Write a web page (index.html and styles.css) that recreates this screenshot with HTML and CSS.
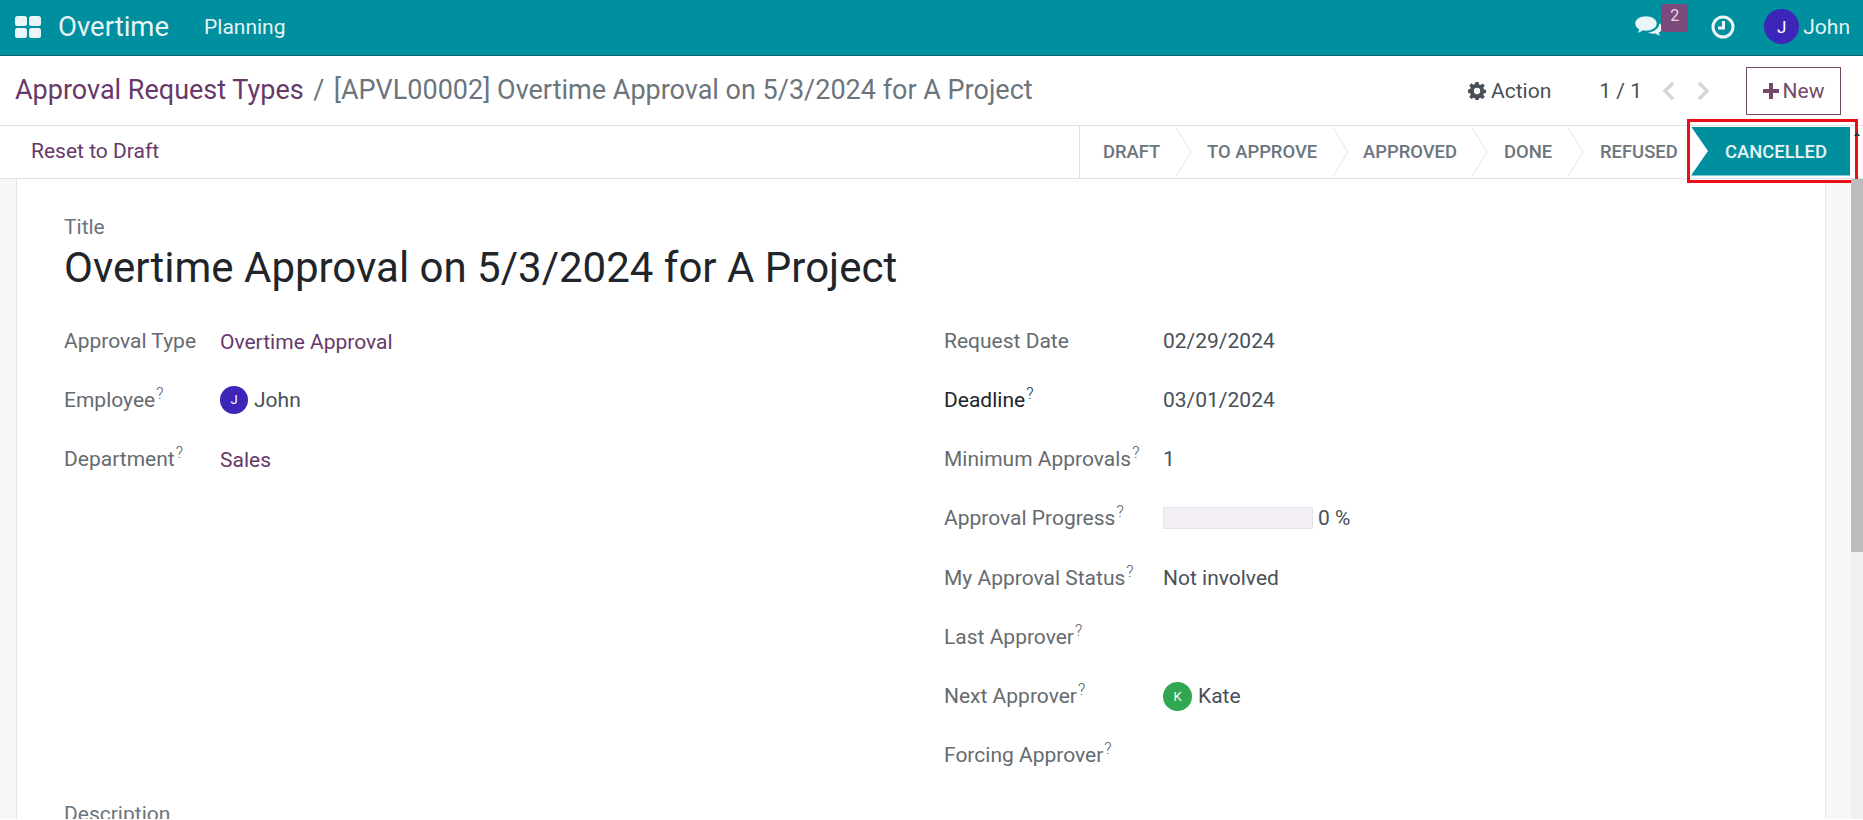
FILE: index.html
```html
<!DOCTYPE html>
<html lang="en">
<head>
<meta charset="utf-8">
<title>Overtime Approval</title>
<link rel="stylesheet" href="styles.css">
</head>
<body>
<header class="navbar">
  <svg class="apps" viewBox="0 0 26 22" width="26" height="22"><rect x="0" y="0" width="12" height="10" rx="2.5"/><rect x="14" y="0" width="12" height="10" rx="2.5"/><rect x="0" y="12" width="12" height="10" rx="2.5"/><rect x="14" y="12" width="12" height="10" rx="2.5"/></svg>
  <span class="brand">Overtime</span>
  <span class="menu">Planning</span>
  <div class="systray">
    <span class="chat">
      <svg viewBox="0 0 28 21" width="28" height="21"><path class="fill" d="M11 0C5 0 0 3 0 7.5c0 2.600 1.600 4.700 4 6-.3 1.200-1 2.300-2 3.300 2 0 4-.8 5.500-2.100 1.100.2 2.300.3 3.500.3 6 0 11-3.200 11-7.500S17 0 11 0z"/><path class="fill" d="M24 7.500c0 5-5.500 8.400-11.500 8.700 1.600 1.200 3.700 1.800 6 1.800.8 0 1.500-.1 2.200-.2 1.300 1.200 3 1.900 5 2-.8-.9-1.500-2-1.700-3 2.400-1.200 4-3.200 4-5.300 0-1.800-1.500-3.500-4-4.500z"/></svg>
      <span class="badge">2</span>
    </span>
    <svg class="clock" viewBox="0 0 24 24" width="24" height="24"><circle cx="12" cy="12" r="10" /><path d="M12.500 6v7H7"/></svg>
    <span class="user"><span class="avatar avatar-nav">J</span><span>John</span></span>
  </div>
</header>

<div class="control">
  <div class="breadcrumb"><a class="crumb-link">Approval Request Types</a><span class="crumb-sep">/</span><span class="crumb-cur">[APVL00002] Overtime Approval on 5/3/2024 for A Project</span></div>
  <div class="actions">
    <span class="action">
      <svg viewBox="0 0 20 20" width="18" height="18"><path d="M8.300 0h3.400l.5 2.700 1.700.7 2.300-1.600 2.400 2.400-1.600 2.300.7 1.700 2.700.5v3.400l-2.700.5-.7 1.700 1.600 2.300-2.400 2.400-2.300-1.600-1.700.7-.5 2.700H8.300l-.5-2.700-1.700-.7-2.300 1.600-2.400-2.400 1.600-2.300-.7-1.700L-.4 11.700V8.300l2.700-.5.7-1.700L1.400 3.800l2.400-2.400 2.300 1.600 1.700-.7zM10 6.500a3.500 3.500 0 100 7 3.500 3.500 0 000-7z" fill-rule="evenodd"/></svg>
      <span>Action</span>
    </span>
    <span class="pager">1 / 1</span>
    <span class="pager-nav">
      <svg viewBox="0 0 14 20" width="14" height="20"><path d="M11 2 3 10l8 8"/></svg>
      <svg viewBox="0 0 14 20" width="14" height="20"><path d="M3 2l8 8-8 8"/></svg>
    </span>
    <button class="new"><svg viewBox="0 0 16 16" width="16" height="16"><path d="M6 0h4v6h6v4h-6v6H6v-6H0V6h6z"/></svg><span>New</span></button>
  </div>
</div>

<div class="statusbar">
  <a class="reset">Reset to Draft</a>
  <div class="steps">
    <span class="step step-draft">DRAFT<svg class="chev" viewBox="0 0 16 48" width="16" height="48"><path d="M0 0l15 24L0 48"/></svg></span>
    <span class="step step-toapprove">TO APPROVE<svg class="chev" viewBox="0 0 16 48" width="16" height="48"><path d="M0 0l15 24L0 48"/></svg></span>
    <span class="step step-approved">APPROVED<svg class="chev" viewBox="0 0 16 48" width="16" height="48"><path d="M0 0l15 24L0 48"/></svg></span>
    <span class="step step-done">DONE<svg class="chev" viewBox="0 0 16 48" width="16" height="48"><path d="M0 0l15 24L0 48"/></svg></span>
    <span class="step step-refused">REFUSED</span>
    <span class="step step-active">CANCELLED</span>
  </div>
  <span class="highlight"></span>
  <span class="scroll-arrow"></span>
</div>

<div class="content">
  <main class="sheet">
    <div class="title-label">Title</div>
    <h1 class="title">Overtime Approval on 5/3/2024 for A Project</h1>
    <div class="columns">
      <div class="col col-left">
        <div class="row"><label class="lbl">Approval Type</label><a class="val link">Overtime Approval</a></div>
        <div class="row"><label class="lbl">Employee<sup>?</sup></label><span class="val person"><span class="avatar avatar-j">J</span>John</span></div>
        <div class="row"><label class="lbl">Department<sup>?</sup></label><a class="val link">Sales</a></div>
      </div>
      <div class="col col-right">
        <div class="row"><label class="lbl">Request Date</label><span class="val">02/29/2024</span></div>
        <div class="row"><label class="lbl strong">Deadline<sup>?</sup></label><span class="val">03/01/2024</span></div>
        <div class="row"><label class="lbl">Minimum Approvals<sup>?</sup></label><span class="val">1</span></div>
        <div class="row"><label class="lbl">Approval Progress<sup>?</sup></label><span class="val progress"><span class="bar"></span>0 %</span></div>
        <div class="row"><label class="lbl">My Approval Status<sup>?</sup></label><span class="val">Not involved</span></div>
        <div class="row"><label class="lbl">Last Approver<sup>?</sup></label></div>
        <div class="row"><label class="lbl">Next Approver<sup>?</sup></label><span class="val person"><span class="avatar avatar-k">K</span>Kate</span></div>
        <div class="row"><label class="lbl">Forcing Approver<sup>?</sup></label></div>
      </div>
    </div>
    <div class="desc">Description</div>
  </main>
  <div class="scrollbar"><span class="thumb"></span></div>
</div>
</body>
</html>
```
FILE: styles.css
```css
* { box-sizing: border-box; }
html, body { margin: 0; height: 820px; overflow: hidden; }
body { font-family: Roboto, "Liberation Sans", sans-serif; font-size: 21px; color: #495057; background: #fff; }

.navbar { height: 56px; background: #008f9e; border-bottom: 1px solid #00646f; display: flex; align-items: center; padding: 0 13px 2px 15px; color: #e6f4f5; }
.apps { fill: #e9f5f6; flex: none; }
.brand { font-size: 27.500px; margin-left: 17px; }
.menu { font-size: 21px; margin-left: 35px; }
.systray { margin-left: auto; display: flex; align-items: center; }
.chat { position: relative; width: 53px; height: 46px; display: flex; align-items: center; }
.chat .fill { fill: #e9f5f6; stroke: #008f9e; stroke-width: .6; }
.badge { position: absolute; left: 26px; top: 0; width: 27px; height: 28px; background: #7c4a7d; border-radius: 3px; color: #e8dbe8; font-size: 16px; line-height: 24px; text-align: center; }
.clock { margin-left: 23px; fill: none; stroke: #e9f5f6; stroke-width: 3; }
.user { margin-left: 29px; display: flex; align-items: center; gap: 4px; font-size: 21px; }
.avatar { display: inline-flex; align-items: center; justify-content: center; border-radius: 50%; color: #fff; flex: none; }
.avatar-nav { width: 35px; height: 35px; background: #3c25b8; font-size: 17px; }

.control { height: 70px; display: flex; align-items: center; justify-content: space-between; padding: 0 22px 0 15px; border-bottom: 1px solid #dee2e6; }
.breadcrumb { font-size: 27px; display: flex; gap: 9.500px; padding-bottom: 2px; }
.crumb-link { color: #67396a; }
.crumb-sep, .crumb-cur { color: #6c757d; }
.actions { display: flex; align-items: center; }
.action { display: flex; align-items: center; gap: 5px; font-size: 21px; color: #495057; }
.action svg { fill: #495057; }
.pager { font-size: 21px; margin-left: 48px; color: #495057; }
.pager-nav { display: flex; gap: 20px; margin-left: 20px; margin-right: 36px; }
.pager-nav svg { fill: none; stroke: #d3d6d9; stroke-width: 3.500; }
.new { height: 48px; width: 95px; border: 1px solid #714b67; background: #fff; color: #714b67; font: 21px Roboto, sans-serif; display: flex; align-items: center; justify-content: center; gap: 4px; padding: 0; }
.new svg { fill: #714b67; }

.statusbar { position: relative; height: 53px; display: flex; align-items: center; justify-content: space-between; padding-left: 31px; border-bottom: 1px solid #dee2e6; }
.reset { color: #67396a; font-size: 21px; padding-bottom: 2px; }
.steps { display: flex; align-self: stretch; margin-right: 13px; padding-bottom: 2px; border-left: 1px solid #dee2e6; font-size: 18.400px; font-weight: 500; color: #6c757d; }
.step { position: relative; display: flex; align-items: center; white-space: nowrap; }
.chev { position: absolute; right: -16px; top: 2px; fill: none; stroke: #e3e5e8; stroke-width: 1; z-index: 1; }
.step-draft { width: 96px; padding-left: 23px; }
.step-toapprove { width: 157px; padding-left: 31px; }
.step-approved { width: 139px; padding-left: 30px; }
.step-done { width: 96px; padding-left: 32px; }
.step-refused { width: 124px; padding-left: 32px; }
.step-active { width: 159px; height: 49px; align-self: center; padding-left: 34px; margin-left: -1px; color: #e8f5f6; background: #008f9e; clip-path: polygon(0 0, 100% 0, 100% 100%, 0 100%, 17px 50%); }
.highlight { position: absolute; left: 1687px; top: -7px; width: 171px; height: 64px; border: 3px solid #ec0d18; pointer-events: none; }
.scroll-arrow { position: absolute; left: 1854px; top: 6px; border: 3.500px solid transparent; border-top: 0; border-bottom: 4px solid #333; }

.content { height: 640px; display: flex; background: #f7f8fa; }
.sheet { flex: 1; margin: 0 25px 0 16px; padding: 36px 47px 0; background: #fff; border-left: 1px solid #e6e8eb; border-right: 1px solid #e6e8eb; overflow: hidden; min-width: 0; }
.title-label { color: #6c757d; line-height: 24px; }
.title { margin: 4px 0 0; font-size: 42px; font-weight: 400; color: #212529; line-height: 50px; }
.columns { display: flex; margin-top: 23px; }
.col-left { width: 880px; --label: 156px; }
.col-right { --label: 219px; }
.row { display: flex; align-items: center; height: 59.300px; }
.row:first-child { height: 50px; margin-bottom: 4px; }
.lbl { width: var(--label); flex: none; color: #666b70; }
.lbl sup { font-size: 16px; font-weight: 300; line-height: 0; margin-left: 1px; color: #555; }
.lbl.strong { color: #212529; }
.lbl.strong sup { color: #212529; }
.link { color: #67396a; padding-top: 2px; }
.person { display: flex; align-items: center; gap: 6px; }
.avatar-j { width: 28px; height: 28px; background: #3c25b8; font-size: 13px; }
.avatar-k { width: 29px; height: 29px; background: #30a750; font-size: 13px; }
.progress { display: flex; align-items: center; gap: 5px; }
.bar { display: block; width: 150px; height: 22px; background: #f4eff5; border: 1px solid #e4e2e6; }
.desc { margin-top: 17px; color: #6c757d; }

.scrollbar { width: 12px; flex: none; background: #f1f1f1; position: relative; }
.thumb { position: absolute; left: 0; right: 0; top: 0; height: 373px; background: #bcbcbc; }
```
